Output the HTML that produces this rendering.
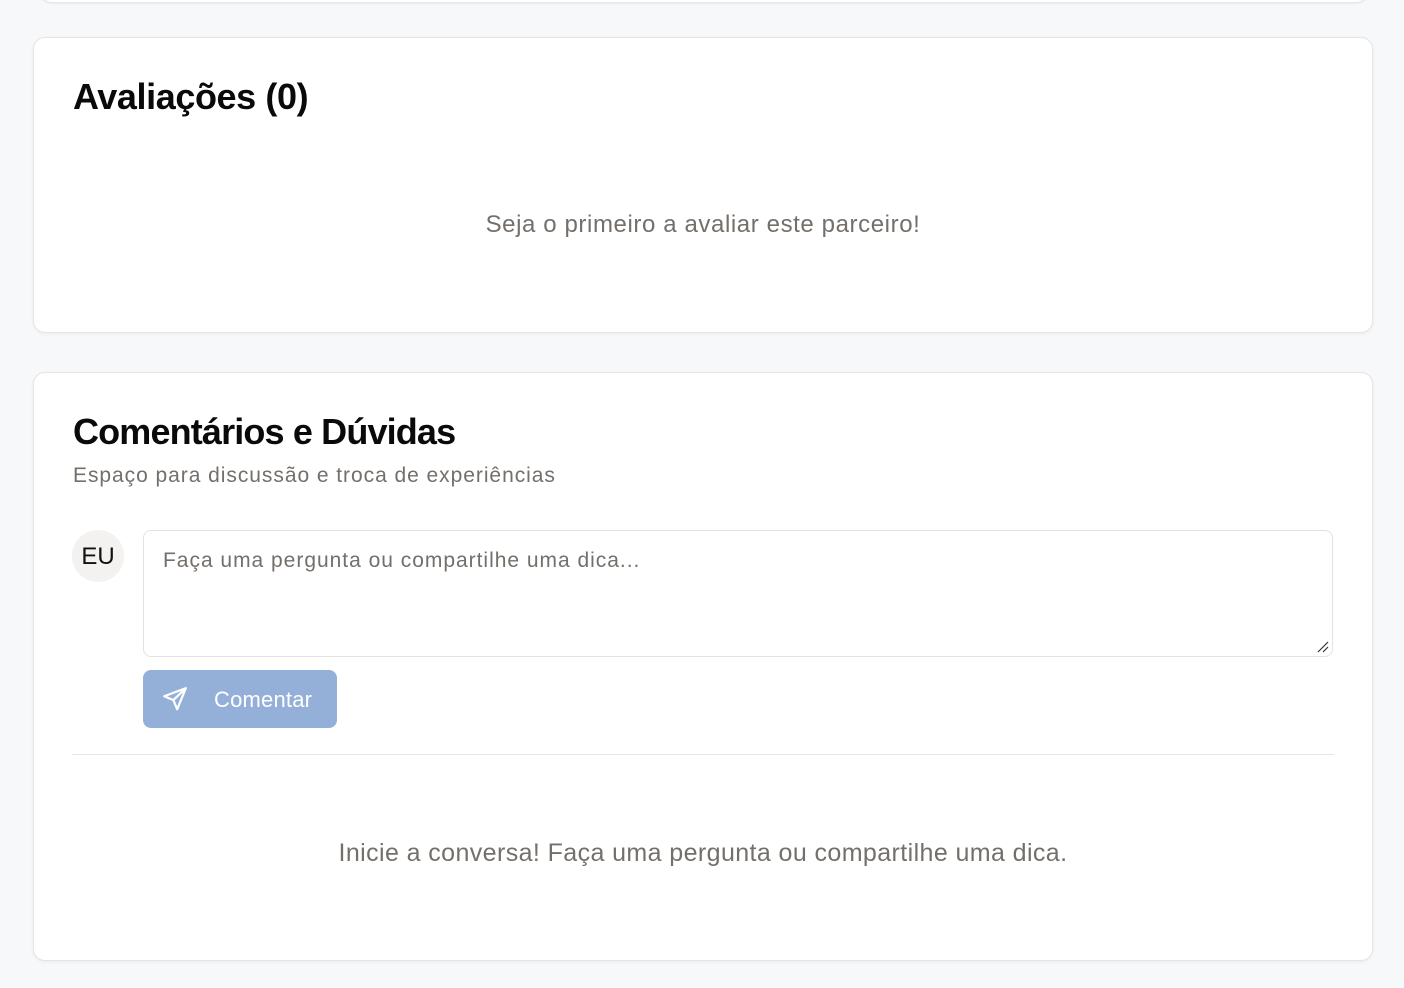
<!DOCTYPE html>
<html><head><meta charset="utf-8"><style>
body{margin:0;width:1404px;height:988px;background:#f7f8fa;font-family:"Liberation Sans",sans-serif;position:relative;overflow:hidden}
.top{position:absolute;left:40px;top:-20px;width:1326px;height:21px;background:#fff;border-radius:0 0 12px 12px;box-shadow:0 1px 2px rgba(0,0,0,.06);border:1px solid #e8e8e8}
.card{position:absolute;left:33px;width:1338px;background:#fff;border:1px solid #e5e5e5;border-radius:12px;box-shadow:0 1px 3px rgba(0,0,0,.05)}
h2{position:absolute;left:39px;margin:0;font-size:36px;font-weight:bold;color:#0a0a0a;letter-spacing:-0.4px}
.muted{color:#746f6a}
</style></head><body>
<div class="top"></div>
<div class="card" style="top:37px;height:294px">
<h2 style="top:38px">Avaliações (0)</h2>
<div class="muted" style="position:absolute;left:0;right:0;top:173px;text-align:center;font-size:24px;letter-spacing:0.6px">Seja o primeiro a avaliar este parceiro!</div>
</div>
<div class="card" style="top:372px;height:587px">
<h2 style="top:38px;letter-spacing:-0.85px">Comentários e Dúvidas</h2>
<div class="muted" style="position:absolute;left:39px;top:91px;font-size:21px;letter-spacing:0.95px">Espaço para discussão e troca de experiências</div>
<div style="position:absolute;left:38px;top:157px;width:52px;height:52px;border-radius:50%;background:#f3f2f1;font-size:24px;line-height:54px;text-align:center;color:#111">EU</div>
<div style="position:absolute;left:109px;top:157px;width:1188px;height:125px;border:1px solid #e2e2e2;border-radius:8px">
<div class="muted" style="position:absolute;left:19px;top:18px;font-size:21px;letter-spacing:0.98px">Faça uma pergunta ou compartilhe uma dica...</div>
<svg style="position:absolute;right:3px;bottom:3px" width="14" height="14"><path d="M13 3L3 13M13 8L8 13" stroke="#333" stroke-width="1.2"/></svg>
</div>
<div style="position:absolute;left:109px;top:297px;width:194px;height:58px;border-radius:8px;background:#94b0d8;color:#fff;font-size:22px">
<svg style="position:absolute;left:19px;top:16px" width="26" height="26" viewBox="0 0 24 24" fill="none" stroke="#fff" stroke-width="2" stroke-linejoin="round" stroke-linecap="round"><path d="M22 2L2 9.5l8.5 3.5 3.5 8.5z M22 2L10.5 13"/></svg>
<span style="position:absolute;left:71px;top:17px;letter-spacing:0.2px">Comentar</span>
</div>
<div style="position:absolute;left:38px;top:381px;width:1262px;height:1px;background:#e5e5e5"></div>
<div class="muted" style="position:absolute;left:0;right:0;top:466px;text-align:center;font-size:25px;letter-spacing:0.4px">Inicie a conversa! Faça uma pergunta ou compartilhe uma dica.</div>
</div>
</body></html>
